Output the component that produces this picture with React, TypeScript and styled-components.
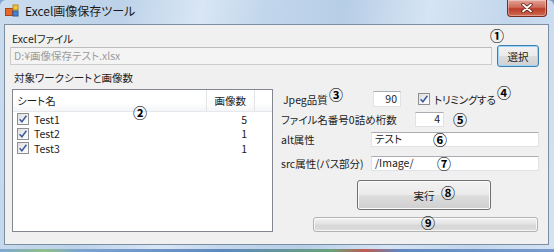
import React from "react";
import styled, { createGlobalStyle } from "styled-components";

const GlobalStyle = createGlobalStyle`
  html, body {
    margin: 0;
    padding: 0;
    background: #6d93c4;
  }
  body {
    font-family: "Noto Sans CJK JP", "Liberation Sans", sans-serif;
    font-feature-settings: "palt";
    font-size: 10.5px;
    color: #1c1c1c;
  }
`;

const Desktop = styled.div`
  width: 554px;
  height: 252px;
  overflow: hidden;
  background: linear-gradient(
    90deg,
    #7fa6d3 0%,
    #8fbf8a 8%,
    #7ea3d0 14%,
    #5f88bf 40%,
    #6aa07a 60%,
    #c05a55 66%,
    #5f88bf 72%,
    #7a9ccc 100%
  );
`;

const Window = styled.div`
  position: relative;
  width: 554px;
  height: 249px;
  box-sizing: border-box;
  padding: 0 5px 0 4px;
  border-radius: 6px 6px 0 0;
  background: linear-gradient(
    100deg,
    #cbdcee 0%,
    #bcd2e9 20%,
    #d9e6f4 34%,
    #c3d7ec 44%,
    #b7cee7 58%,
    #d6e4f3 72%,
    #c2d6ec 86%,
    #d4e3f2 100%
  );
`;

const TitleBar = styled.div`
  display: flex;
  align-items: flex-start;
  height: 24px;
`;

const AppIcon = styled.svg`
  width: 14px;
  height: 13px;
  margin: 4px 0 0 1px;
`;

const Title = styled.span`
  margin: 3px 0 0 6px;
  font-size: 12px;
  line-height: 15px;
  color: #1a1a1a;
`;

const CloseButton = styled.div`
  margin: 0 2px 0 auto;
  width: 40px;
  height: 17px;
  box-sizing: border-box;
  display: flex;
  align-items: center;
  justify-content: center;
  border: 1px solid #7c2b22;
  border-top: none;
  border-radius: 0 0 4px 4px;
  background: linear-gradient(180deg, #e3a396 0%, #cf6b5a 45%, #bb3d2a 55%, #d06a50 100%);
  box-shadow: inset 0 0 0 1px rgba(255, 255, 255, 0.35);
`;

const Client = styled.div`
  height: 221px;
  box-sizing: border-box;
  border: 1px solid #7d8ea3;
  background: #f0f0f0;
  display: flex;
  flex-direction: column;
`;

const FieldLabel = styled.div<{ $indent: number; $top: number }>`
  margin: ${({ $top }) => $top}px 0 0 ${({ $indent }) => $indent}px;
  line-height: 13px;
  white-space: nowrap;
`;

const FileRow = styled.div`
  display: flex;
  align-items: center;
  height: 22px;
  margin-left: 5px;
`;

const TextBox = styled.div<{ $width: number; $height: number; $disabled?: boolean; $align?: string }>`
  width: ${({ $width }) => $width}px;
  height: ${({ $height }) => $height}px;
  box-sizing: border-box;
  padding: 0 3px;
  display: flex;
  align-items: center;
  justify-content: ${({ $align }) => ($align === "right" ? "flex-end" : "flex-start")};
  line-height: 1;
  background: ${({ $disabled }) => ($disabled ? "#f4f4f4" : "#fff")};
  color: ${({ $disabled }) => ($disabled ? "#9c9c9c" : "#1c1c1c")};
  border: 1px solid ${({ $disabled }) => ($disabled ? "#cdcdcd" : "#dfe3e8")};
  border-top-color: ${({ $disabled }) => ($disabled ? "#bcbcbc" : "#abadb3")};
  white-space: nowrap;
`;

const PushButton = styled.div<{ $width: number; $height: number; $focused?: boolean }>`
  width: ${({ $width }) => $width}px;
  height: ${({ $height }) => $height}px;
  box-sizing: border-box;
  display: flex;
  align-items: center;
  justify-content: center;
  border-radius: 3px;
  border: 1px solid ${({ $focused }) => ($focused ? "#3c7fb1" : "#707070")};
  background: linear-gradient(180deg, #f2f2f2 0%, #ebebeb 48%, #dddddd 52%, #cfcfcf 100%);
  box-shadow: inset 0 0 0 1px ${({ $focused }) => ($focused ? "#9fd5f7" : "#fbfbfb")};
`;

const Body = styled.div`
  display: flex;
  align-items: flex-start;
  margin-left: 7px;
`;

const ListView = styled.div`
  width: 261px;
  height: 143px;
  margin-top: 5px;
  box-sizing: border-box;
  border: 1px solid #828790;
  background: #fff;
`;

const HeaderRow = styled.div`
  display: flex;
  height: 21px;
  background: linear-gradient(180deg, #ffffff 0%, #ffffff 60%, #f4f5f7 100%);
  border-bottom: 1px solid #e6e8ec;
`;

const HeaderCell = styled.div<{ $width: number; $right?: boolean }>`
  width: ${({ $width }) => $width}px;
  box-sizing: border-box;
  display: flex;
  align-items: center;
  justify-content: ${({ $right }) => ($right ? "flex-end" : "flex-start")};
  padding: ${({ $right }) => ($right ? "0 8px 0 0" : "0 0 0 4px")};
  border-right: 1px solid #e3e5e9;
  white-space: nowrap;
`;

const ItemRow = styled.div`
  display: flex;
  align-items: center;
  height: 14.5px;
  &:first-of-type {
    margin-top: 2px;
  }
`;

const NameCell = styled.div`
  width: 194px;
  display: flex;
  align-items: center;
  padding-left: 4px;
  box-sizing: border-box;
  gap: 5px;
`;

const CountCell = styled.div`
  width: 48px;
  box-sizing: border-box;
  padding-right: 8px;
  text-align: right;
`;

const CheckBox = styled.span`
  width: 12px;
  height: 12px;
  box-sizing: border-box;
  border: 1px solid #8e8f8f;
  background: linear-gradient(135deg, #dcdcdc 0%, #f4f4f4 60%, #ffffff 100%);
  display: inline-flex;
  align-items: center;
  justify-content: center;
  flex: none;
`;

const Settings = styled.div`
  display: flex;
  flex-direction: column;
  margin: 7px 0 0 8px;
`;

const SettingRow = styled.div<{ $gap: number; $height: number }>`
  display: flex;
  align-items: center;
  height: ${({ $height }) => $height}px;
  margin-top: ${({ $gap }) => $gap}px;
`;

const RowLabel = styled.div<{ $width: number; $pad?: number }>`
  width: ${({ $width }) => $width}px;
  padding-left: ${({ $pad }) => $pad || 0}px;
  box-sizing: border-box;
  white-space: nowrap;
`;

const CheckLabel = styled.label`
  display: flex;
  align-items: center;
  gap: 4px;
  margin-left: 17px;
  white-space: nowrap;
  letter-spacing: -0.2px;
`;

const Indent = styled.div<{ $left: number; $gap: number }>`
  margin: ${({ $gap }) => $gap}px 0 0 ${({ $left }) => $left}px;
`;

const ProgressBar = styled.div`
  width: 225px;
  height: 15px;
  box-sizing: border-box;
  border: 1px solid #b2b2b2;
  border-radius: 3px;
  background: linear-gradient(180deg, #f3f3f3 0%, #e2e2e2 45%, #d6d6d6 60%, #dedede 100%);
  box-shadow: inset 0 0 0 1px rgba(255, 255, 255, 0.7);
`;

const Mark = styled.span<{ $x: number; $y: number }>`
  position: absolute;
  left: ${({ $x }) => $x - 7}px;
  top: ${({ $y }) => $y - 8}px;
  font-family: "Noto Sans CJK JP", sans-serif;
  font-feature-settings: normal;
  font-size: 14px;
  font-weight: 700;
  line-height: 16px;
  color: #000;
`;

const Check = () => (
  <svg width="10" height="10" viewBox="0 0 10 10">
    <path d="M1.6 5.2 L3.9 7.8 L8.4 1.8" fill="none" stroke="#3c5a9c" strokeWidth="1.5" />
  </svg>
);

const sheets = [
  { name: "Test1", count: 5 },
  { name: "Test2", count: 1 },
  { name: "Test3", count: 1 },
];

const marks = [
  { t: "①", x: 497, y: 35 },
  { t: "②", x: 140, y: 112 },
  { t: "③", x: 336, y: 94 },
  { t: "④", x: 504, y: 92 },
  { t: "⑤", x: 460, y: 119 },
  { t: "⑥", x: 440, y: 139 },
  { t: "⑦", x: 444, y: 163 },
  { t: "⑧", x: 448, y: 192 },
  { t: "⑨", x: 428, y: 222 },
];

const App: React.FC = () => {
  return (
    <>
      <GlobalStyle />
      <Desktop>
        <Window>
          <TitleBar>
            <AppIcon viewBox="0 0 14 13">
              <rect x="0.5" y="4.5" width="7" height="7" fill="#e8682a" stroke="#a8431a" />
              <rect x="8" y="1" width="5" height="5" fill="#f3c53b" stroke="#b88d1c" />
              <rect x="8" y="7" width="5" height="5" fill="#4a86d0" stroke="#2c5a99" />
            </AppIcon>
            <Title>Excel画像保存ツール</Title>
            <CloseButton>
              <svg width="12" height="10" viewBox="0 0 12 10">
                <path d="M2 1.5 L10 8.5 M10 1.5 L2 8.5" stroke="#5a1b14" strokeWidth="3.4" strokeLinecap="round" />
                <path d="M2 1.5 L10 8.5 M10 1.5 L2 8.5" stroke="#ffffff" strokeWidth="1.8" strokeLinecap="round" />
              </svg>
            </CloseButton>
          </TitleBar>

          <Client>
            <FieldLabel $indent={7} $top={7}>Excelファイル</FieldLabel>
            <FileRow>
              <TextBox $width={482} $height={18} $disabled>D:¥画像保存テスト.xlsx</TextBox>
              <Indent $left={5} $gap={0}>
                <PushButton $width={42} $height={22} $focused>選択</PushButton>
              </Indent>
            </FileRow>

            <FieldLabel $indent={9} $top={4}>対象ワークシートと画像数</FieldLabel>
            <Body>
              <ListView>
                <HeaderRow>
                  <HeaderCell $width={194}>シート名</HeaderCell>
                  <HeaderCell $width={48} $right>画像数</HeaderCell>
                </HeaderRow>
                {sheets.map((s) => (
                  <ItemRow key={s.name}>
                    <NameCell>
                      <CheckBox>
                        <Check />
                      </CheckBox>
                      {s.name}
                    </NameCell>
                    <CountCell>{s.count}</CountCell>
                  </ItemRow>
                ))}
              </ListView>

              <Settings>
                <SettingRow $gap={0} $height={16}>
                  <RowLabel $width={92} $pad={2}>Jpeg品質</RowLabel>
                  <TextBox $width={28} $height={16} $align="right">90</TextBox>
                  <CheckLabel>
                    <CheckBox>
                      <Check />
                    </CheckBox>
                    トリミングする
                  </CheckLabel>
                </SettingRow>
                <SettingRow $gap={5} $height={15}>
                  <RowLabel $width={134}>ファイル名番号0詰め桁数</RowLabel>
                  <TextBox $width={29} $height={15} $align="right">4</TextBox>
                </SettingRow>
                <SettingRow $gap={5} $height={15}>
                  <RowLabel $width={90}>alt属性</RowLabel>
                  <TextBox $width={168} $height={15}>テスト</TextBox>
                </SettingRow>
                <SettingRow $gap={9} $height={15}>
                  <RowLabel $width={90}>src属性(パス部分)</RowLabel>
                  <TextBox $width={168} $height={15}>/Image/</TextBox>
                </SettingRow>
                <Indent $left={76} $gap={9}>
                  <PushButton $width={134} $height={30}>実行</PushButton>
                </Indent>
                <Indent $left={32} $gap={7}>
                  <ProgressBar />
                </Indent>
              </Settings>
            </Body>
          </Client>

          {marks.map((m) => (
            <Mark key={m.t} $x={m.x} $y={m.y}>
              {m.t}
            </Mark>
          ))}
        </Window>
      </Desktop>
    </>
  );
};

export default App;
